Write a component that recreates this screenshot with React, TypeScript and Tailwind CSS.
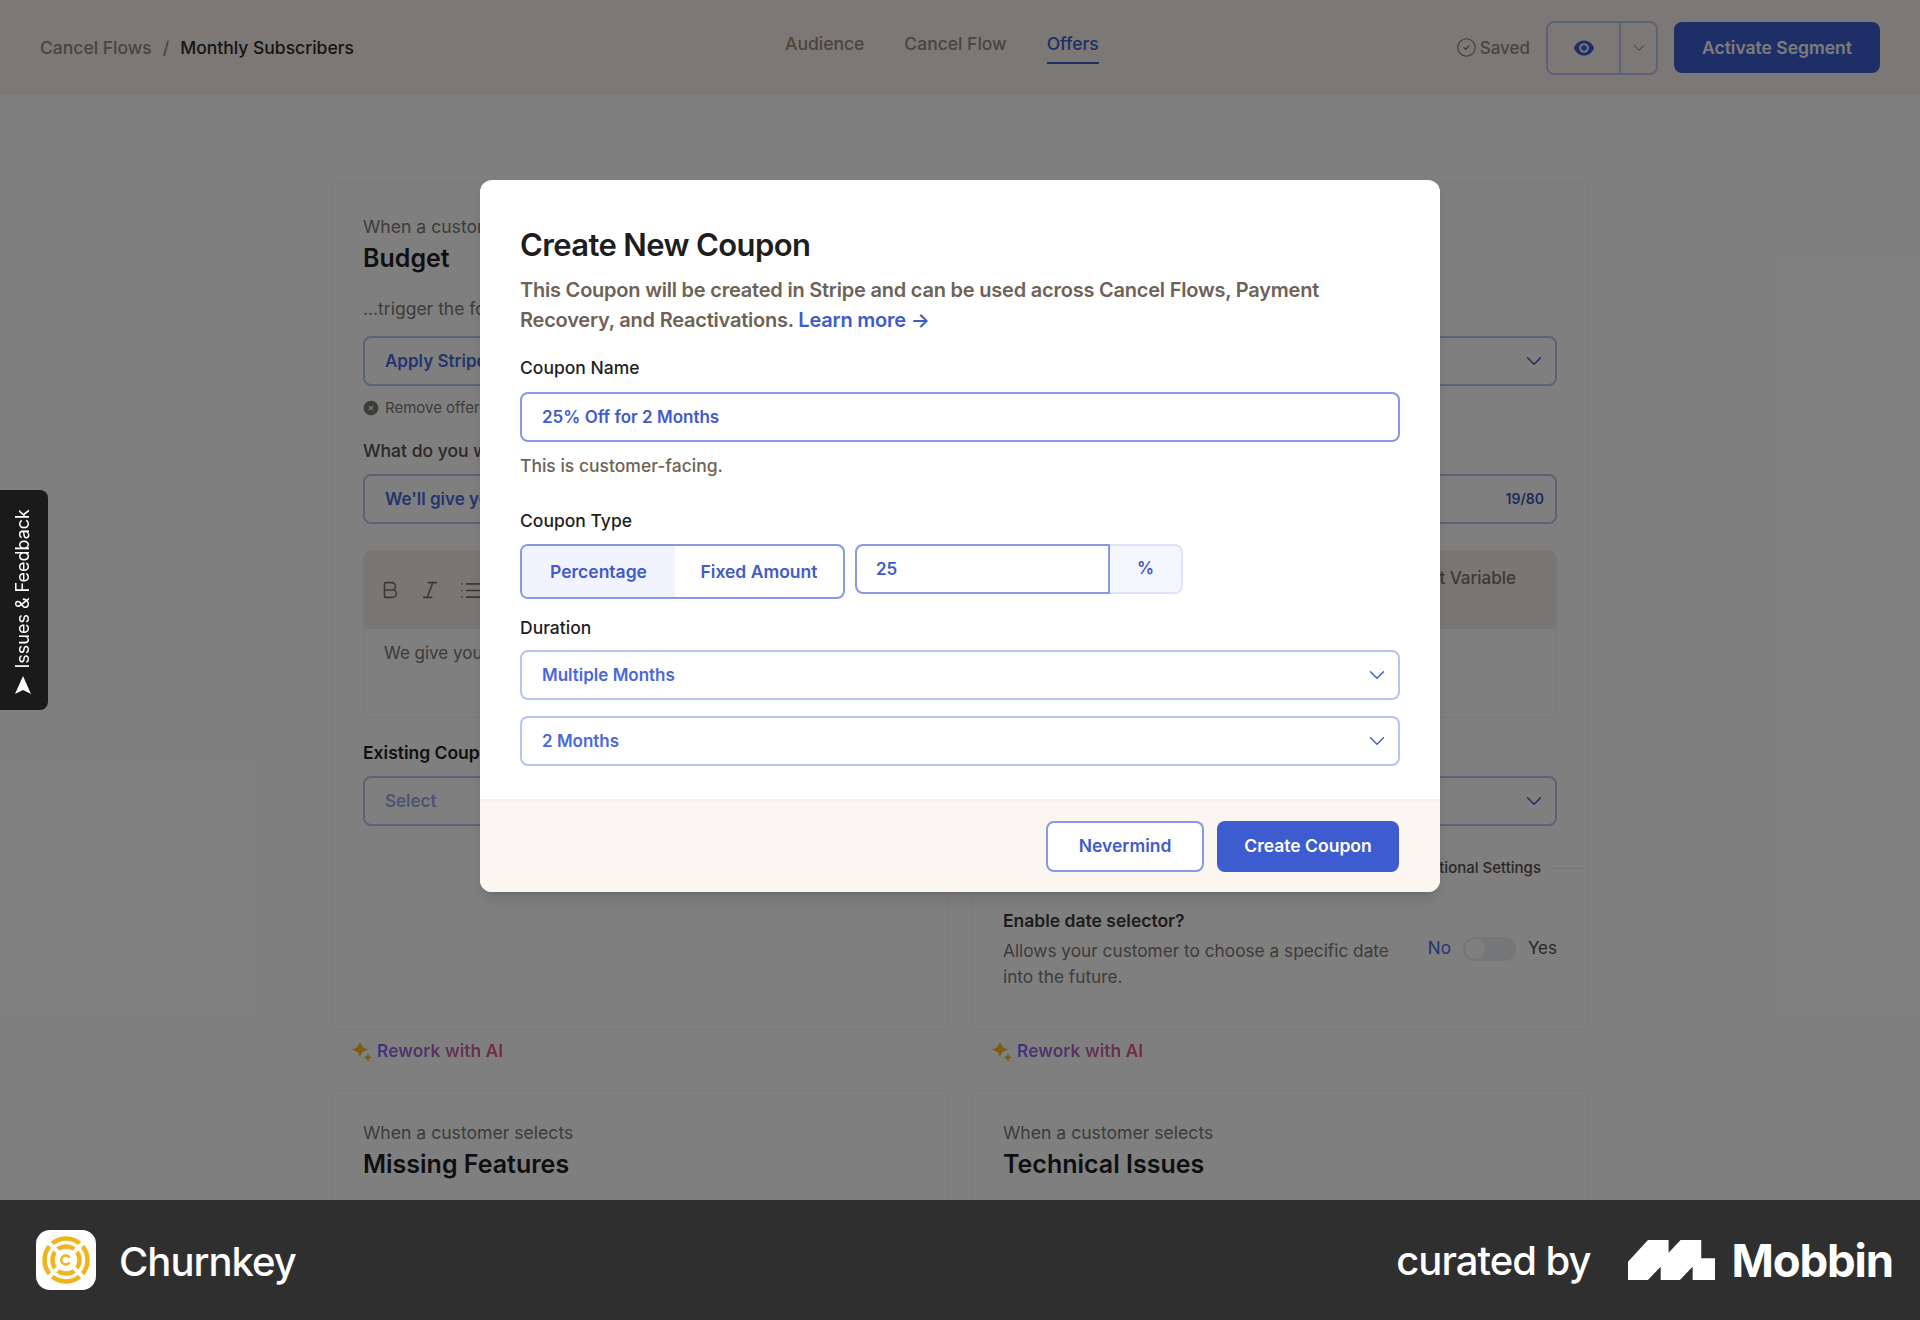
import { ChevronDown, CircleCheck, Bold, Italic, List } from "lucide-react";
import { HiEye, HiXCircle } from "react-icons/hi2";

const fieldClass =
  "flex h-[50px] items-center justify-between rounded-lg border-2 border-[#b6c6f4] pl-5 pr-2 text-[17px] font-semibold text-[#4a68dc]";

function BgSelect({ label, muted }: { label: string; muted?: boolean }) {
  return (
    <div className={fieldClass}>
      <span className={muted ? "pt-[2px] text-[#9aa8e8]" : "pt-[2px]"}>{label}</span>
      <ChevronDown size={26} strokeWidth={1.25} className="text-[#3a55b8]" />
    </div>
  );
}

function Sparkles() {
  return (
    <svg width="20" height="20" viewBox="0 0 20 20" className="text-[#ffb52e]">
      <path fill="currentColor" d="M8 0 L10.4 5.1 L16 7.5 L10.4 9.9 L8 15 L5.6 9.9 L0 7.5 L5.6 5.1 Z" />
      <path fill="currentColor" d="M16 11 L17.3 14.2 L20 15.5 L17.3 16.8 L16 20 L14.7 16.8 L12 15.5 L14.7 14.2 Z" />
    </svg>
  );
}

function Rework() {
  return (
    <div className="flex h-[60px] items-start gap-[5px] pl-[21px] pt-[9px]">
      <div className="pt-[3px]">
        <Sparkles />
      </div>
      <span className="bg-gradient-to-r from-[#8060ff] to-[#f05070] bg-clip-text text-[17.5px] font-semibold leading-6 text-transparent">
        Rework with AI
      </span>
    </div>
  );
}

function CardHead({ title }: { title: string }) {
  return (
    <>
      <p className="text-[17.6px] leading-6 text-[#7c7772]">When a customer selects</p>
      <h2 className="mt-[3px] text-[25px] font-semibold leading-8 text-[#1f1f1f]">{title}</h2>
    </>
  );
}

function OfferForm() {
  return (
    <>
      <p className="mt-[23px] text-[17.5px] leading-6 text-[#7c7772]">...trigger the following offer</p>
      <div className="mt-[15px]">
        <BgSelect label="Apply Stripe Coupon" />
      </div>
      <div className="mt-3 flex h-5 items-center gap-[5px] text-[15px] text-[#7c7772]">
        <HiXCircle size={18} className="-ml-px" />
        Remove offer
      </div>
      <p className="mt-[21px] text-[17.5px] font-medium leading-6 text-[#55504b]">What do you want to say?</p>
      <div className={`mt-[11px] ${fieldClass}`}>
        <span className="pt-[2px]">We'll give you 25% off</span>
        <span className="pr-[3px] text-sm font-semibold text-[#3a55b8]">19/80</span>
      </div>
      <div className="mt-[26px] h-[168px] overflow-hidden rounded-lg border border-[#f6f2ee]">
        <div className="flex h-[78px] items-center justify-between bg-[#f5ede6] pl-[15px] pr-10">
          <div className="flex items-center gap-[18px] text-[#77716b]">
            <Bold size={22} strokeWidth={1.75} />
            <Italic size={22} strokeWidth={1.75} />
            <List size={23} strokeWidth={1.75} />
          </div>
          <span className="pb-[22px] text-[17px] font-medium text-[#7a736c]">Insert Variable</span>
        </div>
        <p className="px-5 pt-3 text-[17px] leading-6 text-[#7a7672]">We give you a discount</p>
      </div>
      <p className="mt-[23px] text-[17.5px] font-semibold leading-6 text-[#1f1f1f]">Existing Coupon</p>
      <div className="mt-[11px]">
        <BgSelect label="Select" muted />
      </div>
    </>
  );
}

function Field({ label }: { label: string }) {
  return (
    <div className={fieldClass + " border-[#8799e0] text-[#3f5bcb]"}>
      <span className="pt-[2px]">{label}</span>
      <ChevronDown size={26} strokeWidth={1.25} className="text-[#3f5bcb]" />
    </div>
  );
}

function CouponModal() {
  return (
    <div className="w-[960px] overflow-hidden rounded-xl bg-white shadow-lg">
      <div className="px-10 pb-[33px] pt-[45px]">
        <h1 className="text-[31px] font-semibold leading-10 tracking-[-0.02em] text-[#1e1e1e]">Create New Coupon</h1>
        <p className="mt-[10px] text-[20px] font-semibold leading-[30px] tracking-[-0.22px] text-[#6e6256]">
          This Coupon will be created in Stripe and can be used across Cancel Flows, Payment Recovery, and
          Reactivations. <span className="text-[#3f5bcb]">Learn more →</span>
        </p>
        <p className="mt-[21px] text-[17.5px] font-medium leading-6 text-[#1e1e1e]">Coupon Name</p>
        <div className="mt-3 flex h-[50px] items-center rounded-lg border-2 border-[#8799e0] pl-5 pt-[2px] text-[17px] font-semibold text-[#3f5bcb]">
          25% Off for 2 Months
        </div>
        <p className="mt-3 text-[17.5px] font-medium leading-6 text-[#6e6256]">This is customer-facing.</p>
        <p className="mt-[31px] text-[17.5px] font-medium leading-6 text-[#1e1e1e]">Coupon Type</p>
        <div className="mt-[11px] flex items-start gap-[11px]">
          <div className="flex h-[55px] w-[325px] overflow-hidden rounded-lg border-2 border-[#8799e0] text-[17.5px] font-semibold text-[#3f5bcb]">
            <div className="flex w-[153px] items-center justify-center bg-[#f1f4fe] pt-[2px]">Percentage</div>
            <div className="flex flex-1 items-center justify-center pt-[2px]">Fixed Amount</div>
          </div>
          <div className="-ml-px flex h-[50px]">
            <div className="flex w-[255px] items-center rounded-l-lg border-2 border-[#8799e0] pl-[19px] pt-[2px] text-[17px] font-semibold text-[#3f5bcb]">
              25
            </div>
            <div className="flex w-[73px] items-center justify-center rounded-r-lg border-2 border-l-0 border-[#dde4fa] bg-[#f4f6fe] text-[17px] font-semibold text-[#3f5bcb]">
              %
            </div>
          </div>
        </div>
        <p className="mt-[17px] text-[17.5px] font-medium leading-6 text-[#1e1e1e]">Duration</p>
        <div className="mt-[10px] flex flex-col gap-4">
          <Field label="Multiple Months" />
          <Field label="2 Months" />
        </div>
      </div>
      <div className="flex h-[93px] items-start justify-end gap-[13px] border-t-2 border-[#f8f1ea] bg-[#fcf6f0] pr-[41px] pt-5">
        <button className="h-[51px] w-[158px] rounded-lg border-2 border-[#8799e0] bg-white text-[17.5px] font-semibold text-[#3f5bcb]">
          Nevermind
        </button>
        <button className="h-[51px] w-[182px] rounded-lg bg-[#3d5ccf] text-[17.5px] font-semibold text-white">
          Create Coupon
        </button>
      </div>
    </div>
  );
}

function ChurnkeyLogo() {
  return (
    <div className="flex h-[60px] w-[60px] items-center justify-center rounded-[14px] bg-white">
      <svg width="48" height="48" viewBox="0 0 48 48" fill="none">
        <circle cx="24" cy="24" r="21.5" stroke="#f0b41c" strokeWidth="4.5" />
        <circle cx="24" cy="24" r="13.5" stroke="#f0b41c" strokeWidth="4.5" />
        <path d="M5 5 L43 43 M43 5 L5 43" stroke="#fff" strokeWidth="4" />
        <path d="M27.5 21.5 A4.5 4.5 0 1 0 27.5 26.5" stroke="#f0b41c" strokeWidth="2.5" />
      </svg>
    </div>
  );
}

export default function App() {
  return (
    <div className="flex h-[1320px] flex-col overflow-hidden bg-white font-['Inter',sans-serif]">
      <div className="relative h-[1200px] overflow-hidden">
        <header className="flex h-[95px] items-center bg-[#f7f0ea] px-10 text-[17.5px] font-medium">
          <div className="flex w-[745px] items-center gap-[11px] pt-[2px]">
            <span className="text-[#94897e]">Cancel Flows</span>
            <span className="text-[#94897e]">/</span>
            <span className="text-[#2a2a2a]">Monthly Subscribers</span>
          </div>
          <nav className="flex gap-10">
            <span className="pb-2 leading-6 text-[#94897e]">Audience</span>
            <span className="pb-2 leading-6 text-[#94897e]">Cancel Flow</span>
            <span className="border-b-2 border-[#3d5ccf] pb-[6px] leading-6 text-[#3d5ccf]">Offers</span>
          </nav>
          <div className="ml-auto flex items-center">
            <CircleCheck size={21} strokeWidth={1.25} className="text-[#7c7268]" />
            <span className="ml-[3px] pt-[2px] text-[17px] text-[#94897e]">Saved</span>
            <div className="ml-4 flex h-[54px] w-[112px] rounded-lg border-2 border-[#b6c6f4]">
              <div className="flex w-[73px] items-center justify-center border-r-2 border-[#b6c6f4] text-[#3d5ccf]">
                <HiEye size={22} />
              </div>
              <div className="flex flex-1 items-center justify-center text-[#3d5ccf]">
                <ChevronDown size={18} strokeWidth={1.25} />
              </div>
            </div>
            <button className="ml-4 h-[51px] w-[206px] rounded-lg bg-[#3d5ccf] pt-[2px] font-semibold text-[#f8f8f8]">
              Activate Segment
            </button>
          </div>
        </header>

        <main className="mx-auto mt-[87px] grid w-[1258px] grid-cols-2 gap-x-[22px]">
          <div>
            <section className="h-[848px] rounded-lg border border-[#f6f2ee] px-[31px] pt-8">
              <CardHead title="Budget" />
              <OfferForm />
            </section>
            <Rework />
            <section className="h-[300px] rounded-lg border border-[#f6f2ee] px-[31px] pt-[30px]">
              <CardHead title="Missing Features" />
            </section>
          </div>
          <div>
            <section className="h-[848px] rounded-lg border border-[#f6f2ee] px-[31px] pt-8">
              <CardHead title="Too Expensive" />
              <OfferForm />
              <div className="-mx-[31px] mt-8 flex h-5 items-center gap-[10px] text-[15px] font-medium text-[#55504b]">
                <div className="h-px flex-1 bg-[#f6ede2]" />
                Additional Settings
                <div className="h-px w-[37px] bg-[#f6ede2]" />
              </div>
              <div className="mt-[31px] flex justify-between">
                <div>
                  <p className="text-[17.5px] font-semibold leading-6 text-[#3a3a3a]">Enable date selector?</p>
                  <p className="mt-[5px] w-[400px] text-[17.25px] leading-[26px] text-[#7c7772]">
                    Allows your customer to choose a specific date into the future.
                  </p>
                </div>
                <div className="mt-[28px] flex h-[24px] items-center text-[17px]">
                  <span className="text-[#4a68dc]">No</span>
                  <div className="ml-3 flex h-[24px] w-[53px] items-center rounded-full bg-[#e8ecf1] pl-[2px]">
                    <div className="h-5 w-5 rounded-full bg-white" />
                  </div>
                  <span className="ml-3 text-[#55504b]">Yes</span>
                </div>
              </div>
            </section>
            <Rework />
            <section className="h-[300px] rounded-lg border border-[#f6f2ee] px-[31px] pt-[30px]">
              <CardHead title="Technical Issues" />
            </section>
          </div>
        </main>

        <div className="absolute inset-0 flex items-start justify-center bg-black/50 pt-[180px]">
          <CouponModal />
        </div>

        <button className="absolute left-0 top-[490px] flex h-[220px] w-[48px] flex-col items-center justify-end gap-[7px] rounded-r-lg bg-[#1a1a1a] pb-4 pr-[2px] text-white">
          <span className="rotate-180 text-[18px] leading-none [writing-mode:vertical-rl]">Issues & Feedback</span>
          <svg width="16" height="18" viewBox="0 0 16 18" fill="currentColor">
            <path d="M8 0 L16 18 L8 14 L0 18 Z" />
          </svg>
        </button>
      </div>

      <footer className="flex h-[120px] items-center justify-between bg-[#2f2f2f] pl-9 pr-[27px] text-white">
        <div className="flex items-center gap-[23px]">
          <ChurnkeyLogo />
          <span className="pt-[3px] text-[40px] font-medium tracking-tight">Churnkey</span>
        </div>
        <div className="flex items-center">
          <span className="pt-[2px] text-[40px] font-medium tracking-tight">curated by</span>
          <svg width="87" height="40" viewBox="717 90 253 120" fill="#fff" className="ml-[37px]" preserveAspectRatio="none">
            <polygon points="717,155 775,90 835,90 835,128 870,90 930,90 930,145 970,145 970,210 905,210 905,170 868,210 812,210 812,170 775,210 717,210" />
          </svg>
          <span className="ml-[17px] pt-[2px] text-[45.5px] font-bold tracking-tight">Mobbin</span>
        </div>
      </footer>
    </div>
  );
}
